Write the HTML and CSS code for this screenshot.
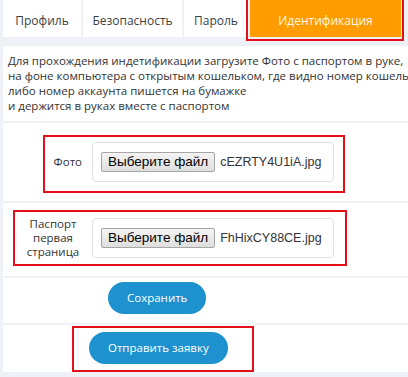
FILE: index.html
```html
<!DOCTYPE html>
<html>
<head lang="ru">
    <meta charset="UTF-8">
    <title>Идентификация</title>
    <link rel="stylesheet" href="styles.css">
</head>
<body>
<div id="page">
    <ul id="tabs">
        <li class="tab-profile">Профиль</li>
        <li class="tab-security">Безопасность</li>
        <li class="tab-password">Пароль</li>
        <li class="tab-ident active">Идентификация</li>
    </ul>
    <div id="panel">
        <p class="note">
            Для прохождения индетификации загрузите Фото с паспортом в руке,<br>
            на фоне компьютера с открытым кошельком, где видно номер кошелька<br>
            либо номер аккаунта пишется на бумажке<br>
            и держится в руках вместе с паспортом
        </p>
        <div class="row row-photo">
            <div class="frame frame-photo">
                <label>Фото</label>
                <div class="file">
                    <span class="file-btn">Выберите файл</span>
                    <span class="file-name">cEZRTY4U1iA.jpg</span>
                </div>
            </div>
        </div>
        <div class="row row-passport">
            <div class="frame frame-passport">
                <label>Паспорт<br>первая<br>страница</label>
                <div class="file">
                    <span class="file-btn">Выберите файл</span>
                    <span class="file-name">FhHixCY88CE.jpg</span>
                </div>
            </div>
        </div>
        <div class="row row-save">
            <span class="btn">Сохранить</span>
        </div>
        <div class="row row-send">
            <div class="frame frame-send">
                <span class="btn">Отправить заявку</span>
            </div>
        </div>
    </div>
</div>
</body>
</html>
```

FILE: styles.css
```css
* {
    margin: 0;
    padding: 0;
    box-sizing: border-box;
}

html, body {
    background: #eef1f5;
    overflow: hidden;
}

body {
    font-family: "Open Sans", "DejaVu Sans", sans-serif;
    color: #333;
}

ul {
    list-style: none;
}

#page {
    width: 560px;
    padding-left: 3px;
}

/* вкладки */
#tabs {
    display: flex;
    gap: 2px;
    margin-bottom: 9px;
}

#tabs li {
    background: #fff;
    font-size: 12px;
    line-height: 17px;
    padding: 12px 0 8px;
    text-align: center;
    color: #3a3f44;
    white-space: nowrap;
}

.tab-profile { width: 78px; }
.tab-security { width: 99px; }
.tab-password { width: 64px; }
.tab-ident { width: 151px; }

#tabs li.active {
    position: relative;
    background: #ff9c00;
    color: #fff8ea;
}

/* красная рамка-пометка */
#tabs li.active:after {
    content: "";
    position: absolute;
    top: -4px;
    left: -4px;
    right: -3px;
    bottom: -4px;
    border: 2px solid #e3101c;
}

#panel {
    background: #fff;
}

.note {
    font-size: 11.5px;
    line-height: 15px;
    padding: 7px 5px 8px;
    white-space: nowrap;
}

.row {
    border-top: 2px solid #eef1f5;
}

.frame {
    display: flex;
    align-items: center;
    width: max-content;
    border: 2px solid #e3101c;
}

.frame label {
    font-size: 11.5px;
    line-height: 14px;
    color: #333;
}

.row-photo {
    padding: 12px 0 8px 40px;
}

.frame-photo {
    padding: 5px 9px 9px 0;
}

.frame-photo label {
    width: 37px;
    text-align: right;
    margin-right: 10px;
}

.row-passport {
    padding: 7px 0 10px 10px;
}

.frame-passport {
    padding: 5px 11px 5px 5px;
}

.frame-passport label {
    width: 66px;
    text-align: center;
    margin-right: 6px;
}

/* поле выбора файла */
.file {
    display: flex;
    align-items: center;
    width: 242px;
    height: 40px;
    padding-left: 8px;
    border: 1px solid #e2e2e2;
    border-radius: 4px;
    font-family: "Liberation Sans", Arial, sans-serif;
    font-size: 13.5px;
    color: #222;
    white-space: nowrap;
}

.file-btn {
    height: 20px;
    line-height: 18px;
    padding: 0 6px;
    border: 1px solid #a6a6a6;
    border-radius: 2px;
    background: linear-gradient(#f4f4f4, #dedede);
    color: #000;
}

.file-name {
    margin-left: 5px;
    font-size: 12.5px;
    color: #333;
}

/* кнопки */
.btn {
    display: inline-block;
    height: 32px;
    line-height: 32px;
    padding: 0 19px;
    border-radius: 16px;
    background: #1d92cf;
    color: #fff;
    font-size: 11.5px;
    white-space: nowrap;
}

.row-save {
    padding: 4px 0 9px 105px;
}

.row-send {
    padding: 1px 0 0 69px;
}

.frame-send {
    padding: 4px 24px 6px 15px;
}
```
